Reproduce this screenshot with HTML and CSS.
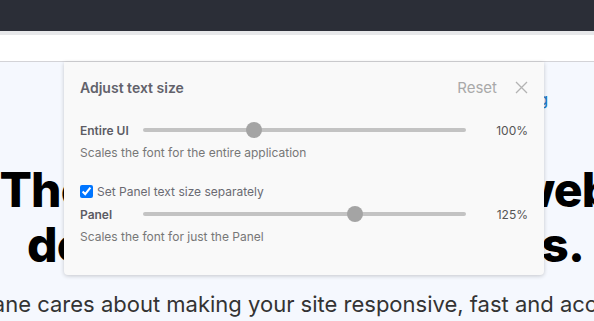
FILE: index.html
```html
<!DOCTYPE html>
<html lang="en">
<head>
    <meta charset="UTF-8">
    <meta name="viewport" content="width=device-width, initial-scale=1.0">
    <title>Adjust text size</title>
    <link rel="stylesheet" href="styles.css">
</head>
<body>
    <div class="titlebar"></div>
    <div class="tabstrip"></div>
    <div class="addressbar"></div>

    <div class="viewport">
        <div class="page">
            <div class="nav"><a href="#">Blog</a></div>
            <h1 class="hero">
                <span>The browser made for web</span>
                <span>developers &amp; designers.</span>
            </h1>
            <p class="lead"><span>Polypane cares about making your site responsive, fast and accessible.</span></p>
        </div>

        <div class="panel">
            <div class="panel-head">
                <h2>Adjust text size</h2>
                <button class="reset">Reset</button>
                <button class="close" aria-label="Close">
                    <svg width="13" height="13" viewBox="0 0 13 13">
                        <path d="M1 1 L12 12 M12 1 L1 12" stroke="#b3b3b3" stroke-width="1.3" fill="none"/>
                    </svg>
                </button>
            </div>

            <div class="row">
                <label for="ui-size">Entire UI</label>
                <input type="range" id="ui-size" min="0" max="100" step="any" value="33.4">
                <span class="value">100%</span>
            </div>
            <p class="hint">Scales the font for the entire application</p>

            <label class="check">
                <input type="checkbox" checked>
                Set Panel text size separately
            </label>

            <div class="row">
                <label for="panel-size">Panel</label>
                <input type="range" id="panel-size" min="0" max="100" step="any" value="66.4">
                <span class="value">125%</span>
            </div>
            <p class="hint">Scales the font for just the Panel</p>
        </div>
    </div>
</body>
</html>
```

FILE: styles.css
```css
* {
    box-sizing: border-box;
}
html, body {
    margin: 0;
    padding: 0;
    height: 100%;
    overflow: hidden;
}
body {
    font-family: Inter, "Noto Sans", sans-serif;
    background: #f5f8fe;
}
.titlebar {
    height: 31px;
    background: #2b2e37;
}
.tabstrip {
    height: 4px;
    background: #e7e8ea;
}
.addressbar {
    height: 27px;
    background: #fff;
    border-bottom: 1px solid #d3d3d7;
}
.viewport {
    position: relative;
    height: calc(100% - 62px);
}

/* page behind the panel */
.page {
    display: flex;
    flex-direction: column;
    align-items: center;
    padding-left: 17px;
}
.nav {
    align-self: stretch;
    display: flex;
    justify-content: flex-end;
    padding: 28px 46px 0 0;
    height: 58px;
}
.nav a {
    color: #1f7cc4;
    font-size: 15px;
    text-decoration: none;
    font-weight: 500;
}
.hero {
    margin: 42px 0 0;
    display: flex;
    flex-direction: column;
    align-items: center;
    font-size: 48px;
    font-weight: 800;
    line-height: 55px;
    letter-spacing: -0.8px;
    color: #000;
    white-space: nowrap;
}
.lead {
    margin: 19px 0 0;
    display: flex;
    justify-content: center;
    width: 100%;
    font-size: 22px;
    color: #333;
    white-space: nowrap;
}

/* text size panel */
.panel {
    position: absolute;
    top: 0;
    left: 64px;
    width: 480px;
    padding: 16px 16px 30px;
    background: #f9f9f9;
    border-radius: 0 0 4px 4px;
    box-shadow: 0 1px 4px rgba(0, 0, 0, 0.2);
    color: #666;
    font-size: 12px;
}
.panel-head {
    display: flex;
    align-items: center;
    height: 18px;
    margin-bottom: 24px;
}
.panel-head h2 {
    flex: 1;
    margin: 0;
    font-size: 14px;
    font-weight: 600;
    color: #62626b;
}
.reset {
    border: 0;
    background: none;
    padding: 0;
    font: inherit;
    font-size: 15px;
    color: #a9a9a9;
    margin-right: 18px;
}
.close {
    border: 0;
    background: none;
    padding: 0;
    width: 13px;
    height: 13px;
    display: flex;
}
.row {
    display: flex;
    align-items: center;
    height: 20px;
}
.row label {
    width: 63px;
    font-weight: 600;
    color: #5c5c64;
}
.row .value {
    width: 62px;
    text-align: right;
    color: #555;
}
.hint {
    margin: 5px 0 0;
    line-height: 16px;
    color: #777;
}
.check {
    display: flex;
    align-items: center;
    gap: 4px;
    height: 18px;
    margin-top: 21px;
    margin-bottom: 4px;
    color: #6a6a72;
}
.check input {
    margin: 0;
    width: 13px;
    height: 13px;
    accent-color: #0075ff;
}

input[type="range"] {
    -webkit-appearance: none;
    appearance: none;
    flex: 1;
    margin: 0;
    height: 16px;
    background: transparent;
}
input[type="range"]::-webkit-slider-runnable-track {
    height: 4px;
    border-radius: 2px;
    background: #c3c3c3;
}
input[type="range"]::-webkit-slider-thumb {
    -webkit-appearance: none;
    width: 16px;
    height: 16px;
    margin-top: -6px;
    border-radius: 50%;
    background: #a4a4a4;
}
```
